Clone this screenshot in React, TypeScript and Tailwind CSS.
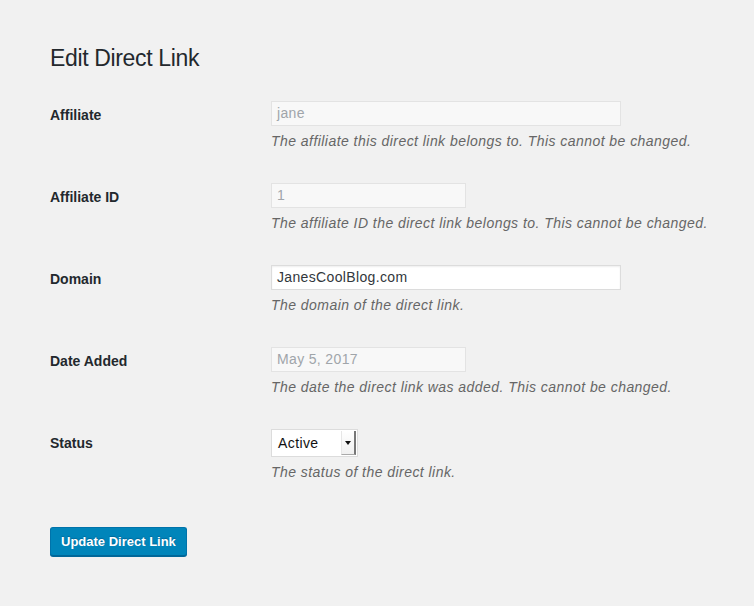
import { FC } from "react"

interface FieldProps {
  label: string
  description: string
  children: React.ReactNode
}

const Field: FC<FieldProps> = ({ label, description, children }) => (
  <div className="grid grid-cols-[221px_1fr] pb-[17px]">
    <div className="pt-[20px] text-[14px] leading-[18px] font-bold text-[#23282d]">{ label }</div>
    <div className="pt-[15px]">
      { children }
      <p className="mt-[5px] text-[14px] leading-[20px] italic tracking-[0.45px] text-[#666]">{ description }</p>
    </div>
  </div>
)

const TextBox: FC<{ value: string, wide?: boolean, disabled?: boolean }> = ({ value, wide, disabled }) => (
  <div
    className={
      `h-[25px] border px-[5px] flex items-center text-[14px] tracking-[0.35px] ${ wide ? 'w-[350px]' : 'w-[195px]' } ` +
      ( disabled
        ? 'border-[#e3e3e3] bg-[#f8f8f8] text-[#a0a5aa]'
        : 'border-[#dcdcdc] bg-white text-[#32373c] shadow-[inset_0_1px_2px_rgba(0,0,0,0.07)]' )
    }
  >
    { value }
  </div>
)

const StatusSelect: FC = () => (
  <div className="w-[87px] h-[28px] flex border border-[#dcdcdc] bg-white">
    <div className="flex-1 flex items-center pl-[6px] text-[14px] tracking-[0.4px] text-[#111]">Active</div>
    {/* native-looking arrow button */}
    <div className="w-[15px] my-[1px] mr-[1px] flex items-center justify-center bg-gradient-to-b from-white to-[#f0f0f0] border-l border-l-[#e6e6e6] border-r-2 border-r-[#777] border-b border-b-[#aaa]">
      <svg width="6" height="4" viewBox="0 0 6 4">
        <path d="M0 0h6L3 4z" fill="#111" />
      </svg>
    </div>
  </div>
)

export default function App() {
  return (
    <div className="min-h-screen bg-[#f1f1f1] font-['Liberation_Sans',Arial,sans-serif] text-[#23282d]">
      <div className="pl-[50px] pt-[44px] pr-[20px]">

        <h1 className="text-[23px] leading-[29px] font-normal tracking-[-0.35px] text-[#23282d]">Edit Direct Link</h1>

        <div className="mt-[13px]">
          <Field label="Affiliate" description="The affiliate this direct link belongs to. This cannot be changed.">
            <TextBox value="jane" wide disabled />
          </Field>

          <Field label="Affiliate ID" description="The affiliate ID the direct link belongs to. This cannot be changed.">
            <TextBox value="1" disabled />
          </Field>

          <Field label="Domain" description="The domain of the direct link.">
            <TextBox value="JanesCoolBlog.com" wide />
          </Field>

          <Field label="Date Added" description="The date the direct link was added. This cannot be changed.">
            <TextBox value="May 5, 2017" disabled />
          </Field>

          <Field label="Status" description="The status of the direct link.">
            <StatusSelect />
          </Field>
        </div>

        <button
          type="button"
          className="mt-[28px] h-[29px] px-[10px] rounded-[3px] bg-[#0085ba] border border-[#0073aa] border-b-[#006799] shadow-[0_1px_0_#006799] text-white text-[13px] font-bold [text-shadow:0_-1px_1px_#006799]"
        >
          Update Direct Link
        </button>

      </div>
    </div>
  )
}
